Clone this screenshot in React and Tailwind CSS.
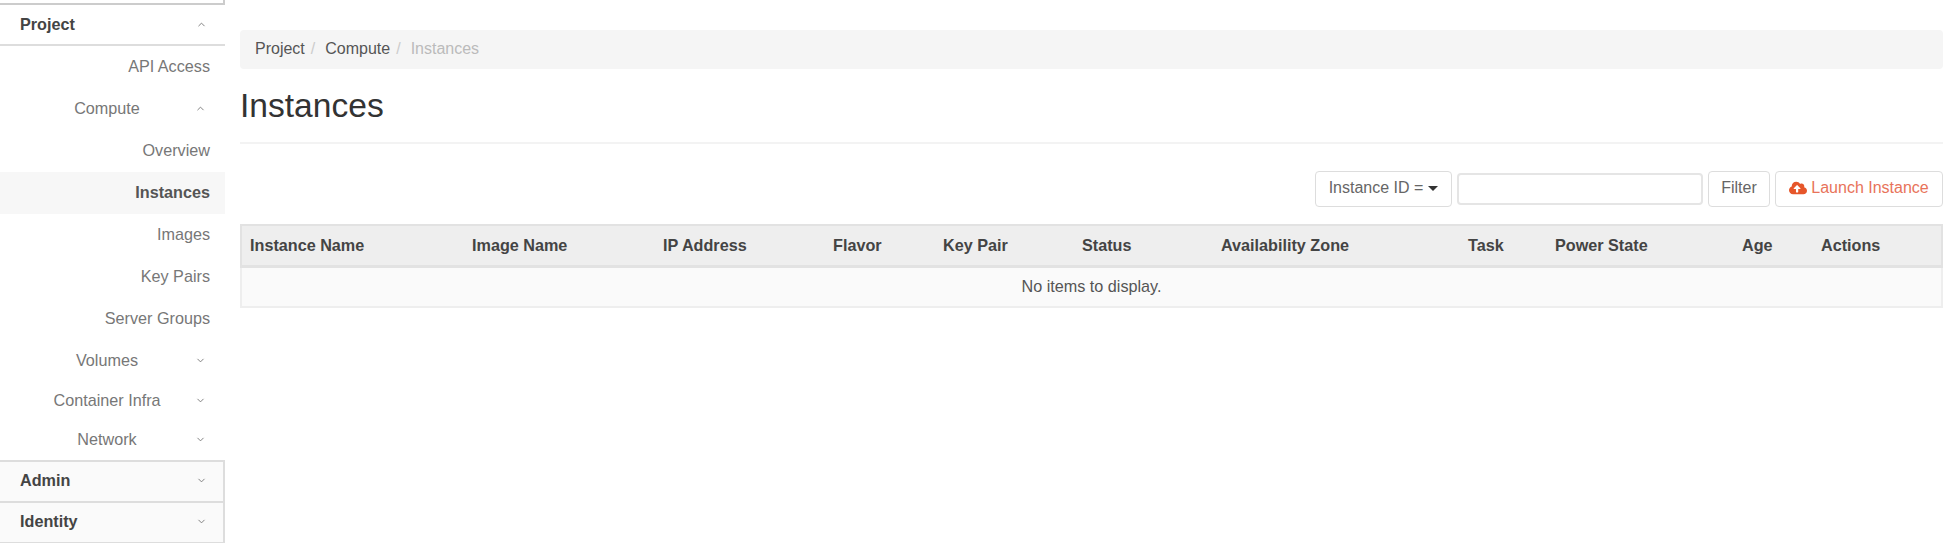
import { ChevronUp, ChevronDown } from "lucide-react"
import { FaCloudUploadAlt } from "react-icons/fa"

const font = "font-['Liberation_Sans',Arial,sans-serif]"

function Chevron({ open }) {
  const Icon = open ? ChevronUp : ChevronDown
  return <Icon className="w-[11px] h-[11px] text-[#777]" strokeWidth={2} />
}

function SubItem({ label, active, h = "h-[42px]" }) {
  return (
    <div
      className={`${h} flex items-center justify-end pr-[15px] pb-[2px] ${
        active ? "bg-[#f7f7f7] font-bold text-[#555]" : "text-[#777]"
      }`}
    >
      {label}
    </div>
  )
}

function SubGroup({ label, open, h = "h-[42px]" }) {
  return (
    <div className={`${h} flex items-center pb-[2px] text-[#777]`}>
      <span className="block w-[195px] pl-[19px] text-center">{label}</span>
      <Chevron open={open} />
    </div>
  )
}

function Section({ label, open }) {
  return (
    <div
      className={`h-[41px] flex items-center justify-between pl-[20px] font-bold border-b-2 border-[#ddd] ${
        open ? "pr-[18px] text-[#444] bg-white" : "pr-[16px] pb-[2px] text-[#444] bg-[#fafafa] border-r-2"
      }`}
    >
      <span>{label}</span>
      <Chevron open={open} />
    </div>
  )
}

function Sidebar() {
  return (
    <aside className="w-[225px] shrink-0 text-[16.2px]">
      <div className="h-[5px] border-b-2 border-r-2 border-[#ccc]" />
      <Section label="Project" open />
      <SubItem label="API Access" />
      <SubGroup label="Compute" open />
      <SubItem label="Overview" />
      <SubItem label="Instances" active />
      <SubItem label="Images" />
      <SubItem label="Key Pairs" />
      <SubItem label="Server Groups" />
      <SubGroup label="Volumes" />
      <SubGroup label="Container Infra" h="h-[39px]" />
      <SubGroup label="Network" h="h-[39px]" />
      <div className="border-t-2 border-[#ddd]">
        <Section label="Admin" />
        <Section label="Identity" />
      </div>
    </aside>
  )
}

const columns = [
  ["Instance Name", "w-[223px]"],
  ["Image Name", "w-[191px]"],
  ["IP Address", "w-[170px]"],
  ["Flavor", "w-[110px]"],
  ["Key Pair", "w-[139px]"],
  ["Status", "w-[139px]"],
  ["Availability Zone", "w-[247px]"],
  ["Task", "w-[87px]"],
  ["Power State", "w-[187px]"],
  ["Age", "w-[79px]"],
  ["Actions", ""],
]

function Toolbar() {
  return (
    <div className="flex justify-end items-center gap-[5px] mt-[27px] h-[36px] text-[16px]">
      <button className="h-[36px] w-[137px] pb-[2px] flex items-center justify-center gap-[5px] border border-[#ddd] rounded-[4px] text-[#666] bg-white">
        Instance ID =
        <span className="w-0 h-0 border-x-[5px] border-x-transparent border-t-[5px] border-t-[#333]" />
      </button>
      <input className="w-[246px] h-[32px] border-2 border-[#e5e5e5] rounded-[4px] bg-white" />
      <button className="h-[36px] w-[62px] pb-[2px] border border-[#ddd] rounded-[4px] text-[#666] bg-white">Filter</button>
      <button className="h-[36px] w-[168px] pb-[2px] flex items-center justify-center gap-[4px] border border-[#ddd] rounded-[4px] text-[#e8735a] bg-white">
        <FaCloudUploadAlt className="w-[18px] h-[18px] text-[#e6562a]" />
        Launch Instance
      </button>
    </div>
  )
}

export default function App() {
  return (
    <div className={`${font} flex w-[1948px] h-[543px] bg-white overflow-hidden`}>
      <Sidebar />
      <main className="w-[1703px] ml-[15px] pt-[30px]">
        <div className="h-[39px] flex items-center gap-[6px] px-[15px] pb-[2px] bg-[#f5f5f5] rounded-[4px] text-[16px] text-[#555]">
          <span>Project</span>
          <span className="text-[#ccc] mr-[4px]">/</span>
          <span>Compute</span>
          <span className="text-[#ccc] mr-[4px]">/</span>
          <span className="text-[#bbb]">Instances</span>
        </div>
        <h1 className="text-[33.6px] leading-[40px] text-[#333] mt-[17px] pb-[16px] border-b-2 border-[#f3f3f3]">
          Instances
        </h1>
        <Toolbar />
        <table className="w-full table-fixed border-collapse mt-[17px] text-[16.2px]">
          <thead>
            <tr className="h-[41px] bg-[#eee] border-2 border-[#e2e2e2] border-b-[3px]">
              {columns.map(([name, width]) => (
                <th key={name} className={`${width} pl-[8px] text-left font-bold text-[#444]`}>
                  {name}
                </th>
              ))}
            </tr>
          </thead>
          <tbody>
            <tr className="h-[41px] bg-[#fafafa] border-2 border-[#eee]">
              <td colSpan={11} className="text-center pb-[2px] text-[#555]">
                No items to display.
              </td>
            </tr>
          </tbody>
        </table>
      </main>
    </div>
  )
}
